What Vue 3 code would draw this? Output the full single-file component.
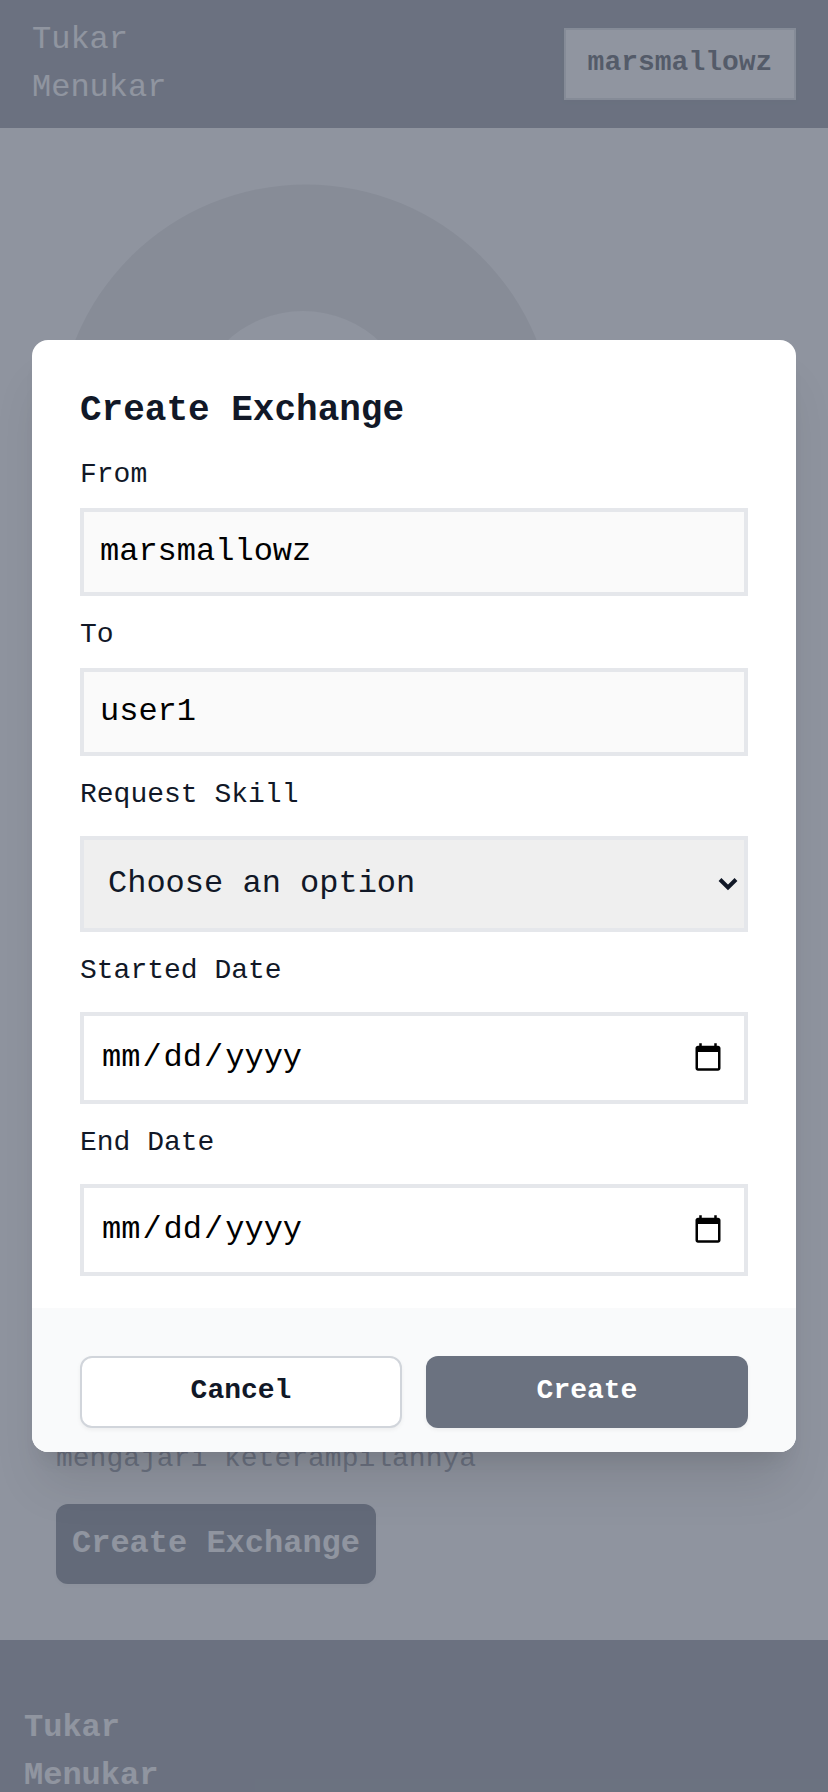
<script setup>
const readonlyFields = [
  { label: 'From', value: 'marsmallowz' },
  { label: 'To', value: 'user1' },
]
const dateFields = ['Started Date', 'End Date']
</script>

<template>
  <div class="page">
    <header class="navbar">
      <div class="brand">Tukar<br />Menukar</div>
      <button class="user">marsmallowz</button>
    </header>

    <main class="content">
      <svg class="avatar" width="500" height="500" viewBox="0 0 500 500">
        <path
          fill="#dbdbdb"
          fill-rule="evenodd"
          d="M250 1.4a248.6 248.6 0 1 1 0 497.2a248.6 248.6 0 1 1 0-497.2zM247 128a111.5 111.5 0 1 0 0 223a111.5 111.5 0 1 0 0-223z"
        />
      </svg>
      <p class="description">mengajari keterampilannya</p>
      <button class="open">Create Exchange</button>
    </main>

    <footer class="footer">Tukar<br />Menukar</footer>

    <div class="overlay">
      <section class="modal">
        <div class="body">
          <h3>Create Exchange</h3>
          <div v-for="f in readonlyFields" :key="f.label" class="field">
            <label>{{ f.label }}</label>
            <div class="box readonly">{{ f.value }}</div>
          </div>
          <div class="field wide">
            <label>Request Skill</label>
            <div class="box select">
              <span>Choose an option</span>
              <svg width="20" height="14" viewBox="0 0 20 14">
                <path d="M2 2.5l8 8l8-8" fill="none" stroke="#111827" stroke-width="4" />
              </svg>
            </div>
          </div>
          <div v-for="d in dateFields" :key="d" class="field wide">
            <label>{{ d }}</label>
            <div class="box date">
              <div class="parts">
                <span class="part">mm</span><span>/</span><span class="part">dd</span><span>/</span><span class="part">yyyy</span>
              </div>
              <svg width="30" height="30" viewBox="0 0 24 24">
                <path d="M20 3h-1V1h-2v2H7V1H5v2H4c-1.1 0-2 .9-2 2v16c0 1.1.9 2 2 2h16c1.1 0 2-.9 2-2V5c0-1.1-.9-2-2-2zm0 18H4V8h16v13z" />
              </svg>
            </div>
          </div>
        </div>
        <div class="actions">
          <button class="cancel">Cancel</button>
          <button class="create">Create</button>
        </div>
      </section>
    </div>
  </div>
</template>

<style>
body {
  margin: 0;
}
</style>

<style scoped>
.page,
.page * {
  box-sizing: border-box;
}
.page {
  position: relative;
  display: flex;
  flex-direction: column;
  height: 1792px;
  overflow: hidden;
  background: #fafafa;
  color: #111827;
  font-family: 'Liberation Mono', monospace;
  font-size: 32px;
  line-height: 48px;
}
button {
  font-family: inherit;
  font-weight: 700;
  border: 0;
  margin: 0;
  padding: 0;
  color: inherit;
  box-shadow: 0 2px 4px rgba(0, 0, 0, 0.05);
}
.navbar {
  flex: none;
  display: flex;
  align-items: center;
  justify-content: space-between;
  height: 128px;
  padding: 0 32px;
  background: #6b7280;
  color: #fff;
}
.user {
  width: 232px;
  height: 72px;
  padding-bottom: 3px;
  border: 2px solid #d1d5db;
  background: #fff;
  color: #111827;
  font-size: 28px;
  line-height: 40px;
}
.content {
  flex: none;
  height: 1512px;
  padding: 55px 56px 0;
}
.avatar {
  display: block;
}
.description {
  margin: 756px 0 0;
  font-size: 28px;
  line-height: 40px;
  color: #6b7280;
}
.open {
  display: block;
  width: 320px;
  height: 80px;
  margin-top: 25px;
  border-radius: 12px;
  background: #4b5563;
  color: #fff;
  font-size: 32px;
  line-height: 48px;
}
.footer {
  flex: none;
  height: 200px;
  padding: 64px 24px 0;
  background: #6b7280;
  color: #fff;
  font-weight: 700;
}
.overlay {
  position: absolute;
  inset: 0;
  display: flex;
  flex-direction: column;
  padding: 340px 32px;
  background: rgba(107, 114, 128, 0.75);
}
.modal {
  flex: none;
  height: 1112px;
  border-radius: 16px;
  overflow: hidden;
  background: #fff;
  box-shadow: 0 40px 50px -10px rgba(0, 0, 0, 0.1), 0 16px 20px -12px rgba(0, 0, 0, 0.1);
}
.body {
  height: 968px;
  padding: 47px 48px 0;
}
h3 {
  margin: 0;
  font-size: 36px;
  line-height: 48px;
}
.field {
  padding-top: 19px;
}
h3 + .field {
  padding-top: 20px;
}
label {
  display: block;
  margin-bottom: 13px;
  font-size: 28px;
  line-height: 40px;
}
.wide label {
  margin-bottom: 21px;
}
.box {
  display: flex;
  align-items: center;
  height: 88px;
  padding: 0 16px;
  border: 4px solid #e5e7eb;
  color: #000;
}
.readonly {
  background: #fafafa;
}
.select {
  justify-content: space-between;
  height: 96px;
  padding: 0 6px 0 24px;
  background: #efefef;
  color: #111827;
}
.date {
  justify-content: space-between;
  height: 92px;
  padding: 0 21px 0 16px;
}
.date svg {
  margin-bottom: 2px;
}
.parts {
  display: flex;
}
.part {
  padding: 0 2px;
}
.actions {
  display: grid;
  grid-template-columns: 1fr 1fr;
  gap: 24px;
  height: 144px;
  padding: 48px 48px 24px;
  background: #f9fafb;
}
.actions button {
  padding-bottom: 3px;
  border-radius: 12px;
  font-size: 28px;
  line-height: 40px;
}
.cancel {
  border: 2px solid #d1d5db;
  background: #fff;
}
.create {
  background: #6b7280;
  color: #fff;
}
</style>
